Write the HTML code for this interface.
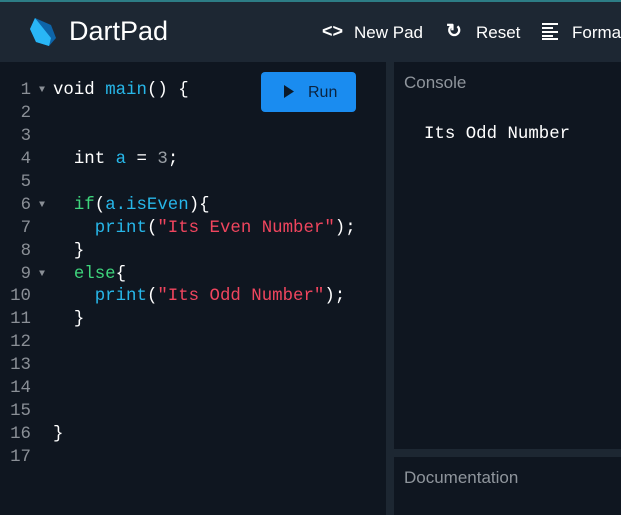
<!DOCTYPE html>
<html><head><style>
body{margin:0;width:621px;height:515px;overflow:hidden;background:#0f1620;font-family:"Liberation Sans",sans-serif;position:relative}
.top{position:absolute;left:0;top:0;width:621px;height:2px;background:#2d7d86}
.hdr{position:absolute;left:0;top:2px;width:621px;height:60px;background:#1d2733}
.t{position:absolute;color:#fff;white-space:nowrap}
.code{position:absolute;left:0;top:80px;font-family:"Liberation Mono",monospace;font-size:17.4px;color:#fff;white-space:pre}
.code div{height:22.95px;line-height:22.95px;overflow:visible}
.ln{display:inline-block;width:31px;text-align:right;color:#8a8f96}
.ar{display:inline-block;width:22px;color:#8a8f96;font-size:10px;line-height:0;text-align:center;vertical-align:2px}
.b{color:#27b6e8}.g{color:#3ed47c}.r{color:#f0455e}.n{color:#9aa0a6}
</style></head><body>
<div class="top"></div>
<div class="hdr"></div>
<svg style="position:absolute;left:27px;top:16px" width="32" height="32" viewBox="0 0 32 32">
<path d="M8 2 L3 13 L9 26 L22 30 L29 22 L24 9 Z" fill="#0d64a8"/>
<path d="M3 13 L8 2 L24 22 L22 30 L9 26 Z" fill="#29b6f6"/>
</svg>
<div class="t" style="left:69px;top:16px;font-size:27px">DartPad</div>
<div class="t" style="left:322px;top:21px;font-size:18px;font-weight:bold">&lt;&gt;</div>
<div class="t" style="left:354px;top:23px;font-size:17px">New Pad</div>
<div class="t" style="left:446px;top:20px;font-size:19px;font-weight:bold">&#x21bb;</div>
<div class="t" style="left:476px;top:23px;font-size:17px">Reset</div>
<svg style="position:absolute;left:542px;top:23px" width="18" height="17"><g fill="#fff"><rect y="0" width="16" height="2"/><rect y="4" width="11" height="2"/><rect y="8" width="16" height="2"/><rect y="12" width="11" height="2"/><rect y="15" width="16" height="2"/></g></svg>
<div class="t" style="left:572px;top:23px;font-size:17px">Format</div>
<div style="position:absolute;left:386px;top:62px;width:8px;height:453px;background:#1d2732"></div>
<div style="position:absolute;left:394px;top:449px;width:227px;height:8px;background:#1d2732"></div>
<div style="position:absolute;left:261px;top:72px;width:95px;height:40px;background:#1a8cf0;border-radius:4px"></div>
<svg style="position:absolute;left:284px;top:85px" width="10" height="13"><path d="M0 0 L10 6.5 L0 13Z" fill="#0b1a2a"/></svg>
<div class="t" style="left:308px;top:84px;font-size:16px;color:#0b2440">Run</div>
<div class="t" style="left:404px;top:73px;font-size:17px;color:#8f959c">Console</div>
<div class="t" style="left:404px;top:468px;font-size:17px;color:#8f959c">Documentation</div>
<div class="t" style="left:424px;top:125px;font-family:'Liberation Mono',monospace;font-size:17.4px">Its Odd Number</div>
<div class="code"><div><span class="ln">1</span><span class="ar">▼</span>void <span class="b">main</span>() {</div><div><span class="ln">2</span></div><div><span class="ln">3</span></div><div><span class="ln">4</span><span class="ar"></span>  int <span class="b">a</span> = <span class="n">3</span>;</div><div><span class="ln">5</span></div><div><span class="ln">6</span><span class="ar">▼</span>  <span class="g">if</span>(<span class="b">a.isEven</span>){</div><div><span class="ln">7</span><span class="ar"></span>    <span class="b">print</span>(<span class="r">"Its Even Number"</span>);</div><div><span class="ln">8</span><span class="ar"></span>  }</div><div><span class="ln">9</span><span class="ar">▼</span>  <span class="g">else</span>{</div><div><span class="ln">10</span><span class="ar"></span>    <span class="b">print</span>(<span class="r">"Its Odd Number"</span>);</div><div><span class="ln">11</span><span class="ar"></span>  }</div><div><span class="ln">12</span></div><div><span class="ln">13</span></div><div><span class="ln">14</span></div><div><span class="ln">15</span></div><div><span class="ln">16</span><span class="ar"></span>}</div><div><span class="ln">17</span></div></div>
</body></html>
